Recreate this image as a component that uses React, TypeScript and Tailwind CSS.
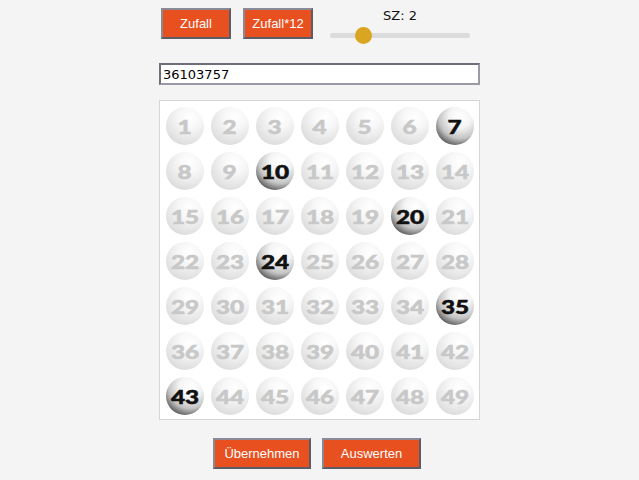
import React from "react";

const picked = new Set([7, 10, 20, 24, 35, 43]);

function Ball({ n }: { n: number }) {
  const on = picked.has(n);
  return (
    <div
      className={
        on
          ? "w-[38px] h-[38px] rounded-full flex items-center justify-center bg-[radial-gradient(circle_at_64%_26%,#ffffff_0%,#f4f4f4_30%,#c4c4c4_58%,#404040_86%,#111_100%)]"
          : "w-[38px] h-[38px] rounded-full flex items-center justify-center bg-[radial-gradient(circle_at_62%_28%,#ffffff_0%,#f7f7f7_30%,#e4e4e4_65%,#cfcfcf_100%)]"
      }
    >
      <span
        className={
          on
            ? "inline-block scale-x-[1.28] text-[19px] leading-none font-black text-[#111] [-webkit-text-stroke:0.5px_#111] font-['Lato',sans-serif]"
            : "inline-block scale-x-[1.28] text-[19px] leading-none font-black text-[#c8c8c8] [-webkit-text-stroke:0.5px_#c8c8c8] font-['Lato',sans-serif]"
        }
      >
        {n}
      </span>
    </div>
  );
}

const btn =
  "h-[31px] bg-[#e8501f] text-white text-[13px] font-['Liberation_Sans',Arial,sans-serif] border-2 border-t-[#8a8a96] border-l-[#8a8a96] border-r-[#5c5c66] border-b-[#5c5c66] flex items-center justify-center";

export default function App() {
  const nums = Array.from({ length: 49 }, (_, i) => i + 1);
  return (
    <div className="min-h-screen bg-[#f4f4f4]">
      <div className="mx-auto w-[321px] pt-[8px]">
        <div className="flex items-start pl-[2px]">
          <button className={btn + " w-[70px]"}>Zufall</button>
          <button className={btn + " w-[70px] ml-[12px]"}>Zufall*12</button>
          <div className="ml-[17px] w-[140px] flex flex-col items-center">
            <div className="text-[13px] leading-none text-[#111] font-['DejaVu_Sans',Verdana,sans-serif] mt-[1px]">
              SZ: 2
            </div>
            <div className="relative w-[140px] h-[5px] mt-[11px] rounded-full bg-[#dcdcdc]">
              <div className="absolute left-[25px] top-[-6px] w-[17px] h-[17px] rounded-full bg-[#daa520]" />
            </div>
          </div>
        </div>

        <div className="mt-[24px] h-[22px] bg-white border-2 border-t-[#6e6e7a] border-l-[#6e6e7a] border-r-[#9a9aa6] border-b-[#9a9aa6] flex items-center px-[2px]">
          <span className="text-[13px] leading-none text-black font-['DejaVu_Sans',Verdana,sans-serif]">
            36103757
          </span>
        </div>

        <div className="mt-[15px] h-[320px] bg-white border border-[#d6d6d6] pl-[6px] pt-[6px]">
          <div className="grid grid-cols-[repeat(7,38px)] gap-x-[7px] gap-y-[7px]">
            {nums.map((n) => (
              <Ball key={n} n={n} />
            ))}
          </div>
        </div>

        <div className="mt-[18px] flex justify-center gap-[11px] pr-[5px]">
          <button className={btn + " w-[98px] h-[30px]"}>Übernehmen</button>
          <button className={btn + " w-[99px] h-[30px]"}>Auswerten</button>
        </div>
      </div>
    </div>
  );
}
